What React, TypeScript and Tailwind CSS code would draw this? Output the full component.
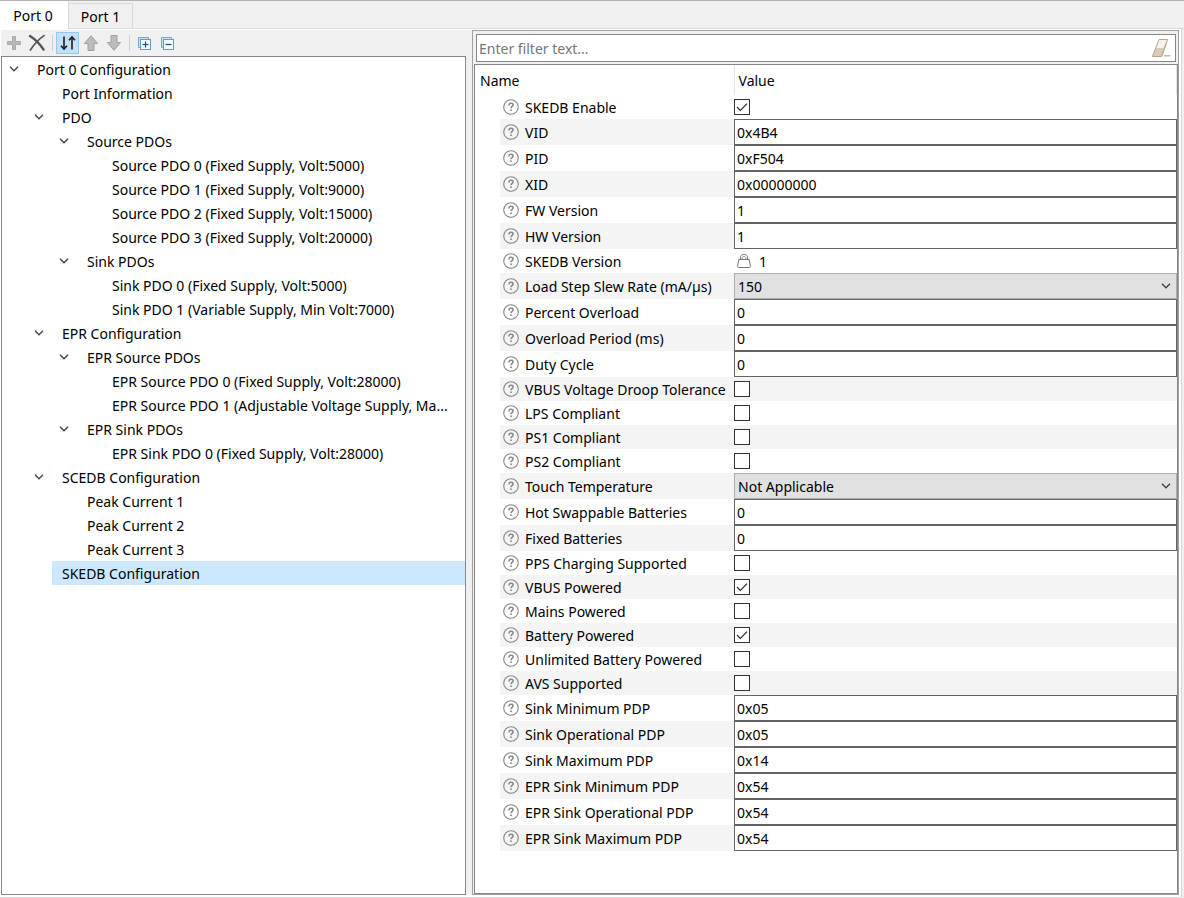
import React, { useState } from 'react'

interface ITreeNode {
  label: string
  level: number
  open?: boolean
}

interface IField {
  name: string
  type: "text" | "check" | "select" | "locked"
  value?: string
  checked?: boolean
}

const treeNodes: ITreeNode[] = [
  { label: "Port 0 Configuration", level: 0, open: true },
  { label: "Port Information", level: 1 },
  { label: "PDO", level: 1, open: true },
  { label: "Source PDOs", level: 2, open: true },
  { label: "Source PDO 0 (Fixed Supply, Volt:5000)", level: 3 },
  { label: "Source PDO 1 (Fixed Supply, Volt:9000)", level: 3 },
  { label: "Source PDO 2 (Fixed Supply, Volt:15000)", level: 3 },
  { label: "Source PDO 3 (Fixed Supply, Volt:20000)", level: 3 },
  { label: "Sink PDOs", level: 2, open: true },
  { label: "Sink PDO 0 (Fixed Supply, Volt:5000)", level: 3 },
  { label: "Sink PDO 1 (Variable Supply, Min Volt:7000)", level: 3 },
  { label: "EPR Configuration", level: 1, open: true },
  { label: "EPR Source PDOs", level: 2, open: true },
  { label: "EPR Source PDO 0 (Fixed Supply, Volt:28000)", level: 3 },
  { label: "EPR Source PDO 1 (Adjustable Voltage Supply, Ma...", level: 3 },
  { label: "EPR Sink PDOs", level: 2, open: true },
  { label: "EPR Sink PDO 0 (Fixed Supply, Volt:28000)", level: 3 },
  { label: "SCEDB Configuration", level: 1, open: true },
  { label: "Peak Current 1", level: 2 },
  { label: "Peak Current 2", level: 2 },
  { label: "Peak Current 3", level: 2 },
  { label: "SKEDB Configuration", level: 1 },
]

const fields: IField[] = [
  { name: "SKEDB Enable", type: "check", checked: true },
  { name: "VID", type: "text", value: "0x4B4" },
  { name: "PID", type: "text", value: "0xF504" },
  { name: "XID", type: "text", value: "0x00000000" },
  { name: "FW Version", type: "text", value: "1" },
  { name: "HW Version", type: "text", value: "1" },
  { name: "SKEDB Version", type: "locked", value: "1" },
  { name: "Load Step Slew Rate (mA/µs)", type: "select", value: "150" },
  { name: "Percent Overload", type: "text", value: "0" },
  { name: "Overload Period (ms)", type: "text", value: "0" },
  { name: "Duty Cycle", type: "text", value: "0" },
  { name: "VBUS Voltage Droop Tolerance", type: "check" },
  { name: "LPS Compliant", type: "check" },
  { name: "PS1 Compliant", type: "check" },
  { name: "PS2 Compliant", type: "check" },
  { name: "Touch Temperature", type: "select", value: "Not Applicable" },
  { name: "Hot Swappable Batteries", type: "text", value: "0" },
  { name: "Fixed Batteries", type: "text", value: "0" },
  { name: "PPS Charging Supported", type: "check" },
  { name: "VBUS Powered", type: "check", checked: true },
  { name: "Mains Powered", type: "check" },
  { name: "Battery Powered", type: "check", checked: true },
  { name: "Unlimited Battery Powered", type: "check" },
  { name: "AVS Supported", type: "check" },
  { name: "Sink Minimum PDP", type: "text", value: "0x05" },
  { name: "Sink Operational PDP", type: "text", value: "0x05" },
  { name: "Sink Maximum PDP", type: "text", value: "0x14" },
  { name: "EPR Sink Minimum PDP", type: "text", value: "0x54" },
  { name: "EPR Sink Operational PDP", type: "text", value: "0x54" },
  { name: "EPR Sink Maximum PDP", type: "text", value: "0x54" },
]

const indents = ["pl-0", "pl-[25px]", "pl-[50px]", "pl-[75px]"]

function Chevron() {
  return (
    <svg width="10" height="6" viewBox="0 0 10 6" fill="none" stroke="#404040" strokeWidth="1.3">
      <path d="M1 0.8 L5 4.8 L9 0.8" />
    </svg>
  )
}

function HelpIcon() {
  return (
    <svg width="16" height="16" viewBox="0 0 16 16" fill="none" stroke="#868686" className="shrink-0">
      <circle cx="8" cy="8" r="7.3" strokeWidth="1.1" />
      <path d="M5.9 6.4 C5.9 4.9 6.8 4.3 8 4.3 C9.3 4.3 10.1 5 10.1 6 C10.1 7.4 8 7.5 8 9.3" strokeWidth="1.5" />
      <path d="M8 10.4 V12" strokeWidth="1.7" />
    </svg>
  )
}

function LockIcon() {
  return (
    <svg width="14" height="14" viewBox="0 0 14 14" fill="none" stroke="#777">
      <path d="M3.5 5.5 V3.5 C3.5 1.5 4.8 0.5 7 0.5 C9.2 0.5 10.5 1.5 10.5 3.5 V5.5" />
      <path d="M5.3 5.5 V4 C5.3 3 6 2.5 7 2.5 C8 2.5 8.7 3 8.7 4 V5.5" strokeWidth="0.8" />
      <path d="M1.8 5.5 H12.2 L13.4 12.5 C13.4 13.1 13 13.5 12.5 13.5 H1.5 C1 13.5 0.6 13.1 0.6 12.5 Z" fill="#fff" />
    </svg>
  )
}

function EraserIcon() {
  return (
    <svg width="20" height="20" viewBox="0 0 20 20">
      <path d="M8 1.5 H16.6 L10.8 18.5 H1.4 Z" fill="#f6f2ea" />
      <path d="M4.6 10 H12.6 L9.4 18 H1.9 Z" fill="#d8cbb9" />
      <path d="M12.6 10 L16.2 2 L15.5 6.5 L10.8 18 H9.4 Z" fill="#c5b59f" />
      <path d="M8 1.5 H16.6 L10.8 18.5 H1.4 Z" fill="none" stroke="#b3a48f" strokeLinejoin="round" />
      <path d="M13 17.8 H19.5" stroke="#b3a48f" strokeWidth="1.2" />
    </svg>
  )
}

function PlusIcon() {
  return (
    <svg width="16" height="16" viewBox="0 0 16 16">
      <path d="M6.5 1.5 H9.5 V6.5 H14.5 V9.5 H9.5 V14.5 H6.5 V9.5 H1.5 V6.5 H6.5 Z" fill="#b9b9b9" stroke="#a9a9a9" />
    </svg>
  )
}

function DeleteIcon() {
  return (
    <svg width="18" height="18" viewBox="0 0 18 18" fill="none" stroke="#555" strokeLinecap="round">
      <path d="M2 2 C6 4.5 11.5 9.5 15.6 15.6" strokeWidth="2.4" />
      <path d="M16 1.6 C11 5 6.5 9.5 2.4 16" strokeWidth="1.7" />
    </svg>
  )
}

function SortIcon() {
  return (
    <svg width="16" height="16" viewBox="0 0 16 16" fill="none" stroke="#1a1a1a" strokeWidth="1.6">
      <path d="M4 1.5 V14" />
      <path d="M1 10.8 L4 14 L7 10.8" />
      <path d="M12 14.5 V2" />
      <path d="M9 5.2 L12 2 L15 5.2" />
    </svg>
  )
}

function BlockArrow({ down }: { down?: boolean }) {
  return (
    <svg width="16" height="16" viewBox="0 0 16 16">
      <path
        d={down ? "M5 0.5 H11 V7.5 H14.6 L8 15.3 L1.4 7.5 H5 Z" : "M5 15.5 H11 V8.5 H14.6 L8 0.7 L1.4 8.5 H5 Z"}
        fill="#bcbcbc"
        stroke="#a0a0a0"
      />
    </svg>
  )
}

function BoxIcon({ plus }: { plus?: boolean }) {
  return (
    <svg width="13" height="13" viewBox="0 0 13 13" fill="none">
      <path d="M0.5 10.5 V0.5 H10.5 V2.5 M0.5 10.5 H2.5" stroke="#7fa3c8" />
      <path d="M1 1 H10 V2 H2 V10 H1 Z" fill="#c9e2f3" />
      <rect x="2.5" y="2.5" width="10" height="10" fill="#f4fbff" stroke="#6f96bd" />
      <path d="M4.5 7.5 H10.5" stroke="#12508c" strokeWidth="1.2" />
      {plus && <path d="M7.5 4.5 V10.5" stroke="#12508c" strokeWidth="1.2" />}
    </svg>
  )
}

function ToolButton({ title, active, children }: { title: string, active?: boolean, children: React.ReactNode }) {
  return (
    <button
      aria-label={title}
      className={`flex h-[22px] w-[23px] items-center justify-center border ${
        active ? "border-[#90c8f6] bg-[#c4e0f5]" : "border-transparent"
      }`}
    >
      {children}
    </button>
  )
}

function Separator() {
  return <div className="mr-[3px] ml-1 h-4 w-px bg-[#d0d0d0]"></div>
}

function ValueCell({ field }: { field: IField }) {
  if (field.type === "text") {
    return (
      <input
        id={field.name}
        type="text"
        defaultValue={field.value}
        className="block h-[26px] w-full border border-[#646464] bg-white px-0.5 outline-none"
      />
    )
  }
  if (field.type === "select") {
    return (
      <div className="grid h-[26px] items-center">
        <select
          id={field.name}
          className="col-start-1 row-start-1 h-[26px] w-full appearance-none border border-[#adadad] bg-[#e1e1e1] px-[3px] pt-px outline-none"
        >
          <option>{field.value}</option>
        </select>
        <div className="pointer-events-none col-start-1 row-start-1 mr-1.5 justify-self-end">
          <Chevron />
        </div>
      </div>
    )
  }
  if (field.type === "locked") {
    return (
      <div className="flex h-6 items-center gap-2 pl-[3px]">
        <LockIcon />
        <output id={field.name} className="pt-px">{field.value}</output>
      </div>
    )
  }
  return (
    <div className="grid h-6 grid-cols-[16px] items-center">
      <input
        id={field.name}
        type="checkbox"
        defaultChecked={field.checked}
        className="peer col-start-1 row-start-1 size-4 appearance-none border border-[#333] bg-white"
      />
      <svg
        width="16" height="16" viewBox="0 0 16 16" fill="none" stroke="#333" strokeWidth="1.3"
        className="pointer-events-none invisible col-start-1 row-start-1 peer-checked:visible"
      >
        <path d="M3 8 L6.4 11.4 L13 4.6" />
      </svg>
    </div>
  )
}

function App() {
  const [activeTab, setActiveTab] = useState("Port 0")
  const [selected, setSelected] = useState("SKEDB Configuration")

  return (
    <div className="flex min-h-screen flex-col border-t border-[#b4b4b4] bg-[#f0f0f0] font-['Noto_Sans','Open_Sans',sans-serif] text-sm text-black">

      {/* Port tabs */}
      <div role="tablist" className="flex h-7 items-end">
        {["Port 0", "Port 1"].map((tab) => (
          <button
            key={tab}
            role="tab"
            aria-selected={activeTab === tab}
            onClick={() => setActiveTab(tab)}
            className={`border-r border-[#d9d9d9] pt-0.5 ${
              activeTab === tab
                ? "h-7 w-[69px] bg-white pr-0.5"
                : "h-[26px] w-16 border-t border-b bg-[#f0f0f0]"
            }`}
          >
            {tab}
          </button>
        ))}
        <div className="h-px flex-1 bg-[#d9d9d9]"></div>
      </div>

      <div className="mr-0.5 flex flex-1 flex-col border-r border-b border-[#d9d9d9] bg-white pt-px pr-0.5 pb-0.5 pl-px">
        <main className="grid flex-1 grid-cols-[465fr_713fr] bg-[#f0f0f0]">

          {/* Configuration tree */}
          <section className="flex min-w-0 flex-col">
            <div className="flex h-[26px] items-center pl-px">
              <ToolButton title="Add"><PlusIcon /></ToolButton>
              <ToolButton title="Delete"><DeleteIcon /></ToolButton>
              <Separator />
              <ToolButton title="Sort" active><SortIcon /></ToolButton>
              <ToolButton title="Move up"><BlockArrow /></ToolButton>
              <ToolButton title="Move down"><BlockArrow down /></ToolButton>
              <Separator />
              <ToolButton title="Expand all"><BoxIcon plus /></ToolButton>
              <ToolButton title="Collapse all"><BoxIcon /></ToolButton>
            </div>
            <ul className="flex-1 border border-[#828790] bg-white">
              {treeNodes.map((node) => (
                <li key={node.label} className={`flex h-6 items-center ${indents[node.level]}`}>
                  <span className="flex w-[25px] shrink-0 justify-center pr-0.5">
                    {node.open && <Chevron />}
                  </span>
                  <button
                    onClick={() => setSelected(node.label)}
                    className={`h-6 min-w-0 flex-1 truncate pt-0.5 pl-2.5 text-left ${
                      selected === node.label ? "bg-[#cce8ff]" : ""
                    }`}
                  >
                    {node.label}
                  </button>
                </li>
              ))}
            </ul>
          </section>

          {/* Properties */}
          <section className="ml-1.5 flex min-w-0 flex-col border border-[#a0a0a0] pl-px">
            <div className="m-0.5 mt-[3px] flex h-7 items-center border border-[#828790] bg-white">
              <input
                type="text"
                aria-label="Filter"
                placeholder="Enter filter text..."
                className="h-full min-w-0 flex-1 px-0.5 outline-none placeholder:text-[#767676]"
              />
              <button aria-label="Clear" className="mr-1">
                <EraserIcon />
              </button>
            </div>
            <div className="flex-1 border border-[#828790] bg-white">
              <table className="w-full table-fixed border-collapse">
                <colgroup>
                  <col className="w-[25px]" />
                  <col className="w-[234px]" />
                  <col />
                </colgroup>
                <thead>
                  <tr className="h-[30px] text-left">
                    <th colSpan={2} className="border-r border-[#e5e5e5] p-0 pt-0.5 pl-[5px] font-normal">Name</th>
                    <th className="border-r border-[#e5e5e5] p-0 pt-0.5 pl-1 font-normal">Value</th>
                  </tr>
                </thead>
                <tbody>
                  {fields.map((field, index) => (
                    <tr key={field.name}>
                      <td className="p-0"></td>
                      <td className={`p-0 ${index % 2 === 1 ? "bg-[#f4f4f4]" : ""}`}>
                        <label htmlFor={field.name} className="flex items-center gap-1.5 pl-[3px] whitespace-nowrap">
                          <HelpIcon />
                          <span className="pt-0.5">{field.name}</span>
                        </label>
                      </td>
                      <td className={`p-0 ${index % 2 === 1 ? "bg-[#f4f4f4]" : ""}`}>
                        <ValueCell field={field} />
                      </td>
                    </tr>
                  ))}
                </tbody>
              </table>
            </div>
          </section>
        </main>
      </div>
    </div>
  )
}

export default App
